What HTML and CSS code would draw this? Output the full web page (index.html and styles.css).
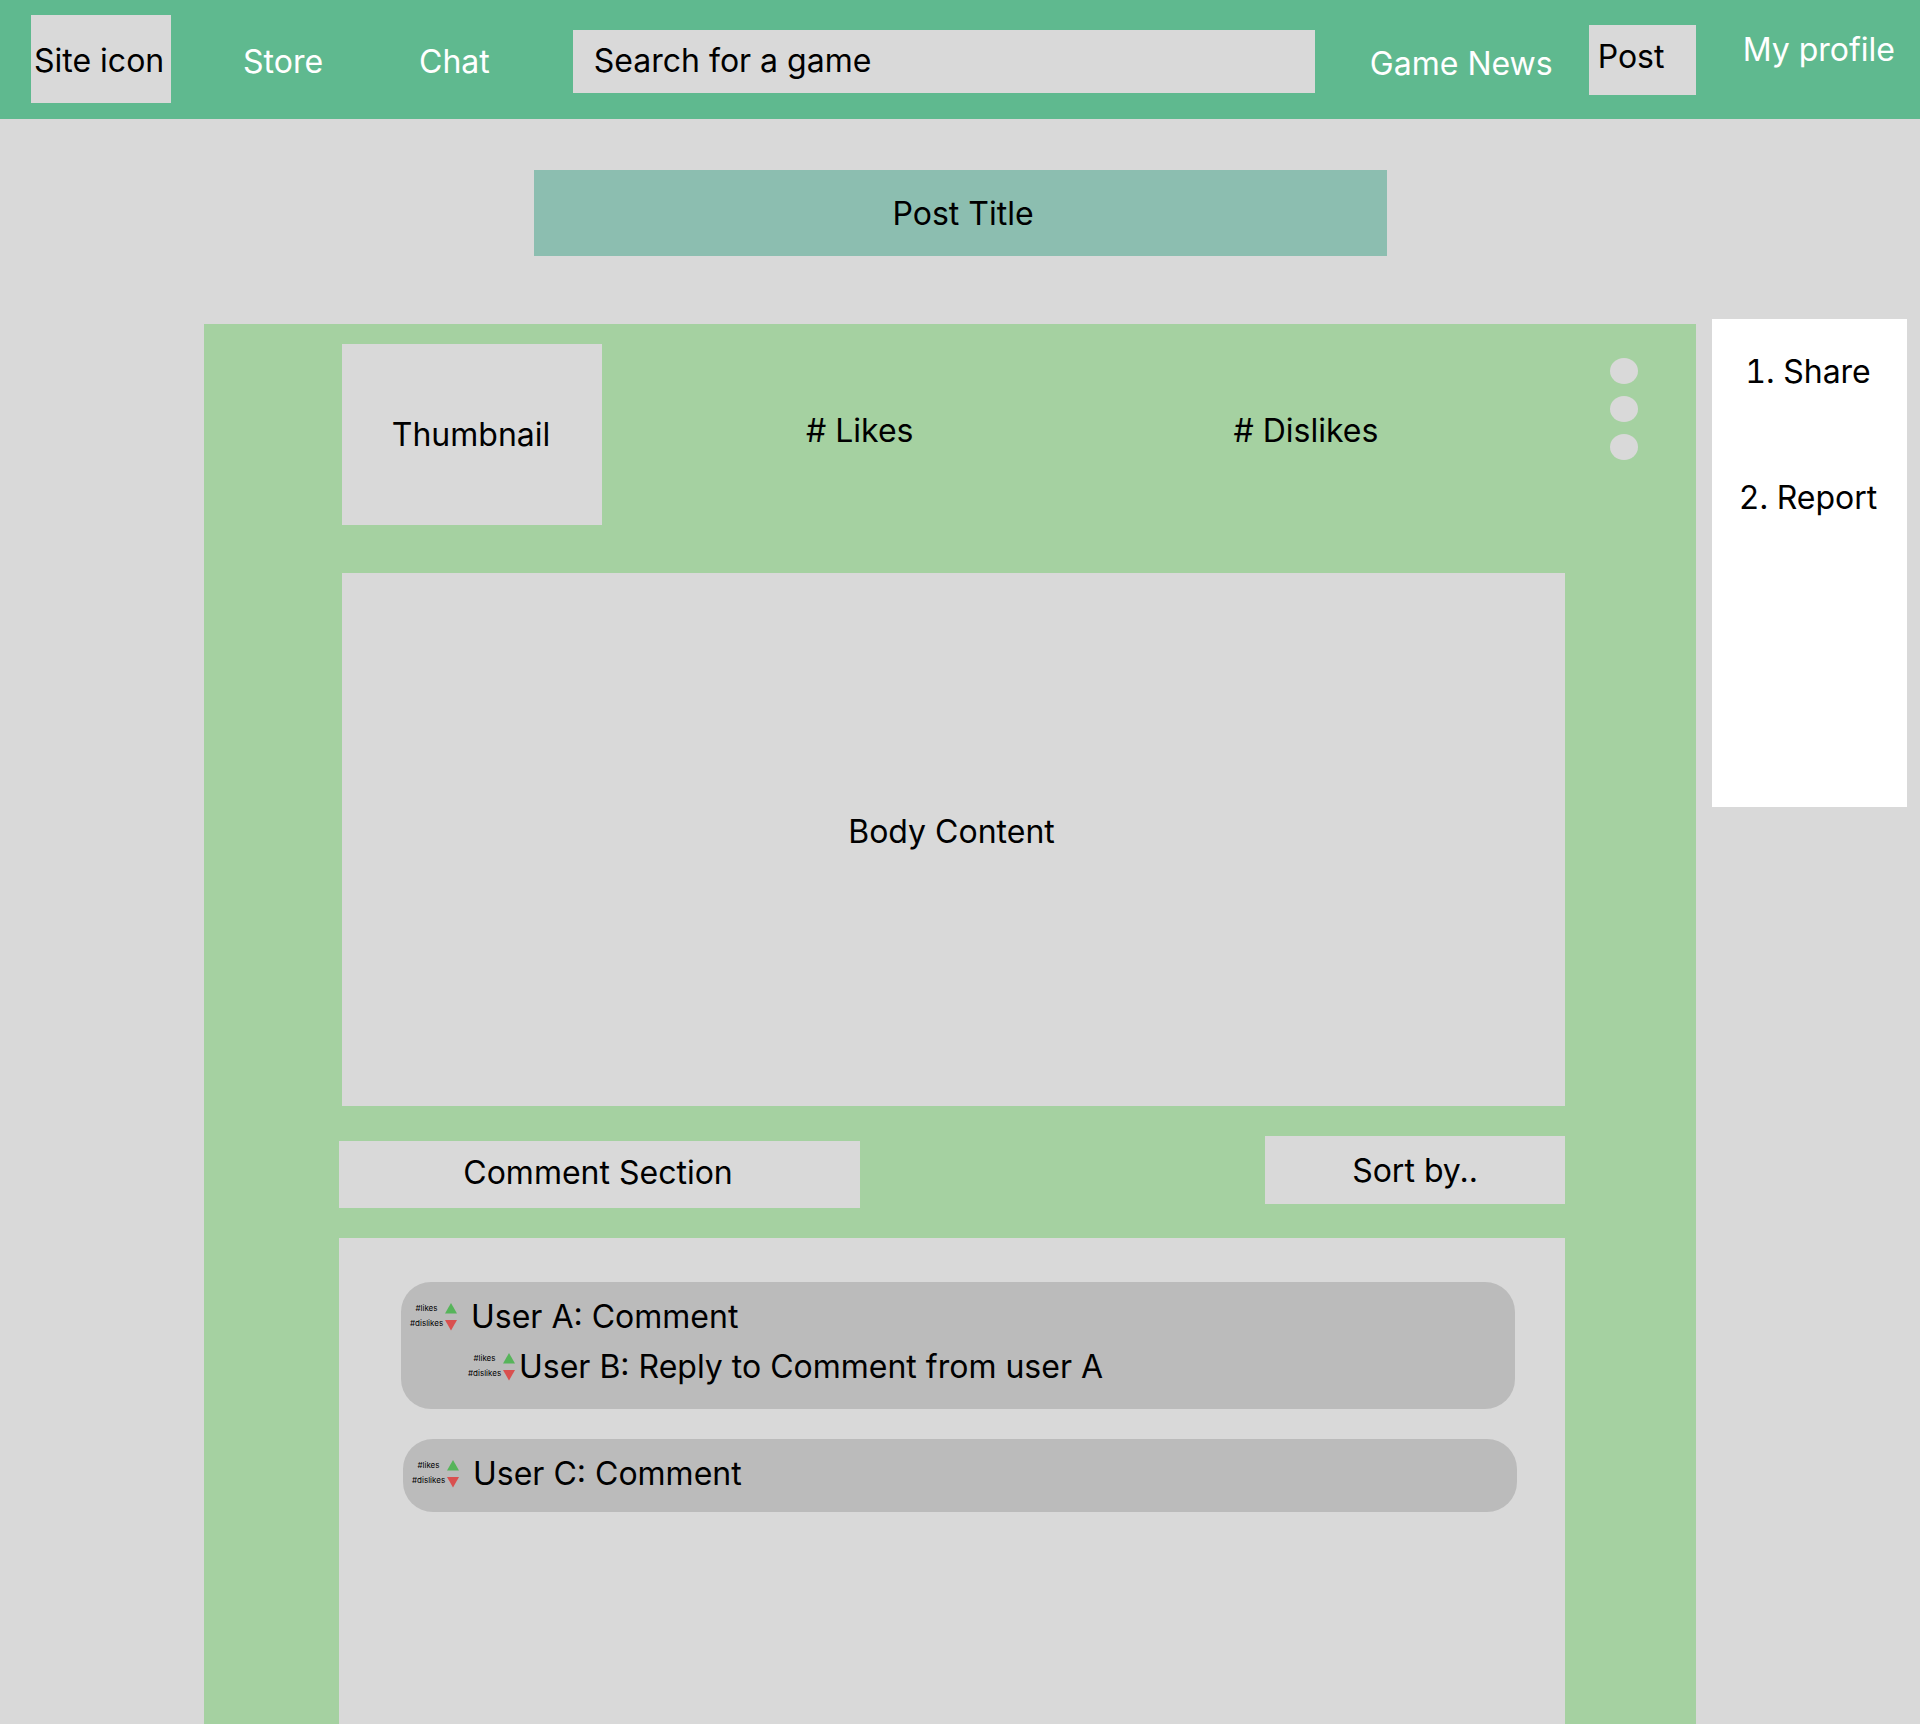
FILE: index.html
```html
<!DOCTYPE html>
<html lang="en">
<head>
<meta charset="utf-8">
<meta name="viewport" content="width=device-width, initial-scale=1">
<title>Post Title</title>
<link rel="stylesheet" href="styles.css">
</head>
<body>
<header class="topbar">
  <a class="site-icon" href="#">Site icon</a>
  <nav class="nav">
    <a href="#">Store</a>
    <a href="#">Chat</a>
  </nav>
  <input class="search" type="search" placeholder="Search for a game" aria-label="Search for a game">
  <a class="news" href="#">Game News</a>
  <button class="post-button" type="button">Post</button>
  <a class="profile" href="#">My profile</a>
</header>

<h1 class="post-title">Post Title</h1>

<main class="page">
  <article class="post">
    <div class="post-head">
      <div class="thumbnail">Thumbnail</div>
      <div class="stats">
        <span># Likes</span>
        <span># Dislikes</span>
      </div>
      <button class="menu-button" type="button" aria-label="More options">
        <svg width="28" height="102" viewBox="0 0 28 102" fill="#d9d9d9" aria-hidden="true">
          <ellipse cx="14" cy="13" rx="14" ry="13"/>
          <ellipse cx="14" cy="51" rx="14" ry="13"/>
          <ellipse cx="14" cy="89" rx="14" ry="13"/>
        </svg>
      </button>
    </div>
    <div class="post-body">Body Content</div>
    <div class="comments-head">
      <h2 class="comments-title">Comment Section</h2>
      <select class="sort" aria-label="Sort comments">
        <option>Sort by..</option>
      </select>
    </div>
    <section class="comments">
      <div class="thread thread-replies">
        <div class="comment">
          <div class="votes">
            <span>#likes</span>
            <button type="button" aria-label="Like"><svg width="12" height="11" viewBox="0 0 12 11" aria-hidden="true"><path d="M6 0L12 10.500H0Z" fill="#56b45a"/></svg></button>
            <span class="dislikes">#dislikes</span>
            <button type="button" aria-label="Dislike"><svg width="12" height="11" viewBox="0 0 12 11" aria-hidden="true"><path d="M0 0H12L6 10.500Z" fill="#d9504f"/></svg></button>
          </div>
          <p>User A: Comment</p>
        </div>
        <div class="comment reply">
          <div class="votes">
            <span>#likes</span>
            <button type="button" aria-label="Like"><svg width="12" height="11" viewBox="0 0 12 11" aria-hidden="true"><path d="M6 0L12 10.500H0Z" fill="#56b45a"/></svg></button>
            <span class="dislikes">#dislikes</span>
            <button type="button" aria-label="Dislike"><svg width="12" height="11" viewBox="0 0 12 11" aria-hidden="true"><path d="M0 0H12L6 10.500Z" fill="#d9504f"/></svg></button>
          </div>
          <p>User B: Reply to Comment from user A</p>
        </div>
      </div>
      <div class="thread">
        <div class="comment">
          <div class="votes">
            <span>#likes</span>
            <button type="button" aria-label="Like"><svg width="12" height="11" viewBox="0 0 12 11" aria-hidden="true"><path d="M6 0L12 10.500H0Z" fill="#56b45a"/></svg></button>
            <span class="dislikes">#dislikes</span>
            <button type="button" aria-label="Dislike"><svg width="12" height="11" viewBox="0 0 12 11" aria-hidden="true"><path d="M0 0H12L6 10.500Z" fill="#d9504f"/></svg></button>
          </div>
          <p>User C: Comment</p>
        </div>
      </div>
    </section>
  </article>

  <aside class="options">
    <ol>
      <li><button type="button">Share</button></li>
      <li><button type="button">Report</button></li>
    </ol>
  </aside>
</main>
</body>
</html>
```
FILE: styles.css
```css
* {
  box-sizing: border-box;
}

body {
  display: flex;
  flex-direction: column;
  min-height: 100vh;
  margin: 0;
  background: #d9d9d9;
  color: #000;
  font: 400 32px/39px Inter, sans-serif;
}

h1,
h2,
p {
  margin: 0;
  font: inherit;
}

a {
  color: inherit;
  text-decoration: none;
  white-space: nowrap;
}

button,
input,
select {
  margin: 0;
  padding: 0;
  border: 0;
  border-radius: 0;
  background: none;
  color: inherit;
  font: inherit;
  appearance: none;
}

svg {
  display: block;
}

/* Top bar */
.topbar {
  display: flex;
  align-items: center;
  padding: 15px 25px 16px 31px;
  background: #5fb98f;
  color: #fff;
}

.site-icon {
  width: 140px;
  padding: 26px 0 23px 3px;
  background: #d9d9d9;
  color: #000;
}

.nav {
  display: flex;
  gap: 96px;
  margin: 4px 83px 0 72px;
}

.search {
  flex: 1;
  min-width: 0;
  height: 63px;
  margin-top: 4px;
  padding: 0 21px 2px;
  background: #d9d9d9;
  color: #000;
}

.search::placeholder {
  color: #000;
  opacity: 1;
}

.news {
  margin: 8px 36px 0 55px;
}

.post-button {
  width: 107px;
  height: 70px;
  margin-top: 2px;
  padding: 0 0 8px 9px;
  background: #d9d9d9;
  color: #000;
  text-align: left;
}

.profile {
  align-self: flex-start;
  margin-left: 47px;
  padding-top: 15px;
}

/* Title */
.post-title {
  width: 100%;
  max-width: 853px;
  margin: 51px auto 63px;
  padding: 24px 0 23px 6px;
  background: #8cbeb0;
  text-align: center;
}

/* Post */
.page {
  flex: 1;
  display: flex;
  gap: 16px;
  padding: 0 13px 0 204px;
}

.post {
  flex: 1;
  display: flex;
  flex-direction: column;
  min-width: 0;
  margin-top: 5px;
  padding: 20px 131px 0 135px;
  background: #a5d1a1;
}

.post-head {
  display: flex;
  align-items: center;
  margin: 0 -73px 48px 3px;
}

.thumbnail {
  width: 260px;
  padding: 71px 2px 71px 0;
  background: #d9d9d9;
  text-align: center;
}

.stats {
  flex: 1;
  display: flex;
  gap: 320px;
  padding: 0 0 8px 204px;
  white-space: nowrap;
}

.menu-button {
  align-self: flex-start;
  margin-top: 14px;
}

.post-body {
  display: flex;
  align-items: center;
  justify-content: center;
  min-height: 533px;
  margin-left: 3px;
  padding: 0 4px 16px 0;
  background: #d9d9d9;
}

.comments-head {
  display: flex;
  align-items: flex-end;
  justify-content: space-between;
  margin: 30px 0;
}

.comments-title {
  width: 521px;
  margin-top: 5px;
  padding: 12px 3px 16px 0;
  background: #d9d9d9;
  text-align: center;
}

.sort {
  align-self: flex-start;
  width: 300px;
  height: 68px;
  background: #d9d9d9;
  text-align: center;
  text-align-last: center;
}

/* Comments */
.comments {
  flex: 1;
  display: flex;
  flex-direction: column;
  gap: 30px;
  padding: 44px 50px 44px 62px;
  background: #d9d9d9;
}

.thread {
  display: flex;
  flex-direction: column;
  gap: 11px;
  margin: 0 -2px 0 2px;
  padding: 15px 9px 19px;
  border-radius: 30px;
  background: #bbb;
}

.thread-replies {
  margin: 0;
  padding-bottom: 23px;
}

.comment {
  display: flex;
  gap: 14px;
}

.reply {
  gap: 4px;
  margin-left: 58px;
}

.votes {
  display: grid;
  grid-template-columns: 33px 12px;
  grid-auto-rows: 11px;
  align-items: center;
  gap: 6px 2px;
  padding-top: 6px;
  font-size: 8px;
  line-height: 7px;
  text-align: center;
}

.dislikes {
  align-self: start;
}

/* Share and report */
.options {
  align-self: flex-start;
  width: 195px;
  min-height: 488px;
  padding: 33px 3px 33px 0;
  background: #fff;
}

.options ol {
  display: flex;
  flex-direction: column;
  gap: 87px;
  margin: 0;
  padding: 0;
  list-style-position: inside;
  text-align: center;
}
```
